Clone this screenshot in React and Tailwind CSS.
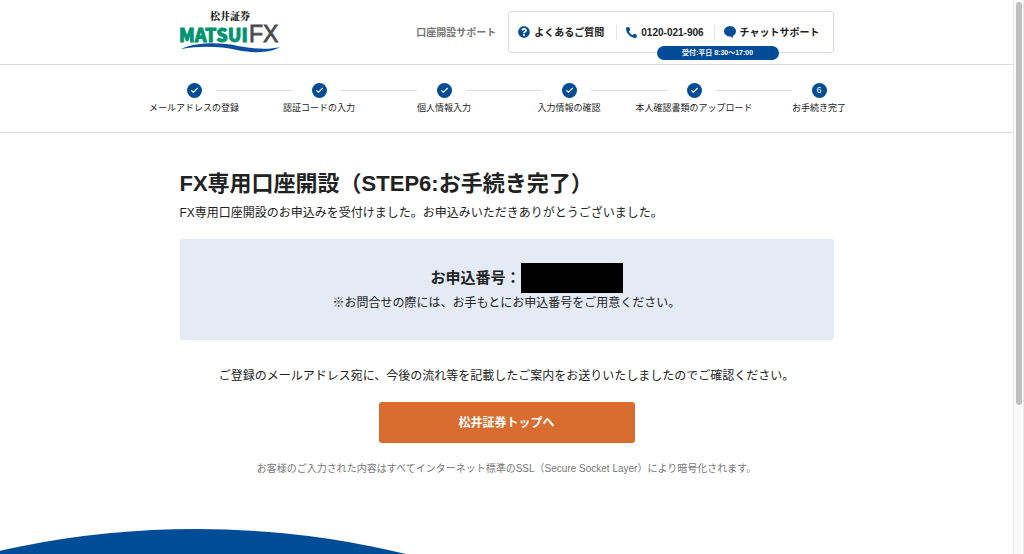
import React from 'react';
import { FaQuestionCircle, FaPhoneAlt } from 'react-icons/fa';
import { Check } from 'lucide-react';

const steps = [
  'メールアドレスの登録',
  '認証コードの入力',
  '個人情報入力',
  '入力情報の確認',
  '本人確認書類のアップロード',
  'お手続き完了',
];

const Logo = () => (
  <a href="#" className="block" aria-label="松井証券 MATSUI FX">
    <svg width="102" height="50" viewBox="0 -4 102 50">
      <text x="50" y="9" textAnchor="middle" fontSize="10" fontWeight="900" fill="#222" fontFamily="'Noto Serif CJK JP', 'Noto Sans CJK JP', serif">
        松井証券
      </text>
      <text x="-1" y="31" fontSize="18" fontWeight="900" fill="#00936f" stroke="#00936f" strokeWidth="0.8" fontFamily="'Noto Sans CJK JP', sans-serif">
        MATSUI
      </text>
      <text x="69" y="31" fontSize="23" fill="#4a4a4c" stroke="#4a4a4c" strokeWidth="0.8" fontFamily="'Liberation Sans', sans-serif">
        FX
      </text>
      <path d="M1 38 C18 30.500 42 31.500 58 35 C76 38.500 90 38.500 100 36 C90 42 74 42.500 57 39 C40 35.500 22 34.500 1 38 Z" fill="#0b4fa3" />
    </svg>
  </a>
);

const ChatIcon = () => (
  <svg width="12" height="12" viewBox="0 0 12 12" fill="#004c97">
    <ellipse cx="6" cy="5.200" rx="6" ry="5.200" />
    <path d="M5.500 9.500 L8.600 12 L9.200 8.500 Z" />
  </svg>
);

const Header = () => (
  <header className="border-b border-[#dcdcdc]">
    <div className="mx-auto flex h-16 max-w-[654px] items-center justify-between">
      <Logo />
      <div className="flex items-center gap-3">
        <span className="text-[10px] font-bold text-[#777]">口座開設サポート</span>
        <div className="relative flex h-[42px] items-center rounded-[3px] border border-[#dcdcdc] pr-[13px] pl-[9px] text-[10px] font-bold">
          <a href="#faq" className="flex items-center gap-1 pr-3">
            <FaQuestionCircle size={12} className="text-[#004c97]" />
            よくあるご質問
          </a>
          <a href="tel:0120021906" className="flex items-center gap-1 border-l border-[#e4e4e4] pr-2.5 pl-[9px]">
            <FaPhoneAlt size={11} className="text-[#004c97]" />
            0120-021-906
          </a>
          <a href="#chat" className="flex items-center gap-1 border-l border-[#e4e4e4] pl-[9px]">
            <ChatIcon />
            チャットサポート
          </a>
          <span className="absolute right-[54px] -bottom-2 flex h-[14px] w-[122px] items-center justify-center rounded-full bg-[#004c97] text-[7px] text-white">
            受付:平日 8:30〜17:00
          </span>
        </div>
      </div>
    </div>
  </header>
);

const Steps = () => (
  <nav className="border-b border-[#dcdcdc] pt-[18px] pb-[17px]">
    <ol className="mx-auto grid max-w-[750px] grid-cols-6">
      {steps.map((label, i) => {
        const last = i === steps.length - 1;
        return (
          <li key={label} className="flex flex-col items-center gap-[3px]">
            <div className="grid w-full grid-cols-[1fr_15px_1fr] items-center">
              <div className={`mr-5 h-px ${i > 0 ? 'bg-[#dcdcdc]' : ''}`} />
              <span className="flex size-[15px] items-center justify-center rounded-full bg-[#004c97] text-[9px] leading-none text-white">
                {last ? i + 1 : <Check size={9} strokeWidth={3} />}
              </span>
              <div className={`ml-3.5 h-px ${last ? '' : 'bg-[#dcdcdc]'}`} />
            </div>
            <span className="text-[9px] leading-[14px] whitespace-nowrap">{label}</span>
          </li>
        );
      })}
    </ol>
  </nav>
);

export default function App() {
  return (
    <div className="flex min-h-screen bg-white font-['Liberation_Sans','Noto_Sans_CJK_JP',sans-serif] text-[#222]" lang="ja">
      <div className="flex min-w-0 flex-1 flex-col">
        <Header />
        <Steps />

        <main className="mx-auto w-full max-w-[654px] pt-[35px]">
          <h1 className="text-[22px] leading-8 font-bold">FX専用口座開設（STEP6:お手続き完了）</h1>
          <p className="mt-[3px] text-xs leading-5">
            FX専用口座開設のお申込みを受付けました。お申込みいただきありがとうございました。
          </p>

          {/* Application number */}
          <section className="mt-4 rounded-[3px] bg-[#e4ebf5] pt-6 pb-[27px] text-center">
            <p className="flex items-center justify-center text-[15px] font-bold">
              お申込番号：
              {/* the mask runs past the number it covers */}
              <span className="h-[30px] w-[62px]">
                <span className="block h-full w-[102px] bg-black" />
              </span>
            </p>
            <p className="text-xs leading-5">※お問合せの際には、お手もとにお申込番号をご用意ください。</p>
          </section>

          <p className="mt-[26px] text-center text-xs leading-5">
            ご登録のメールアドレス宛に、今後の流れ等を記載したご案内をお送りいたしましたのでご確認ください。
          </p>
          <a
            href="#top"
            className="mx-auto mt-4 flex h-[41px] w-64 items-center justify-center rounded-[3px] bg-[#d96d2f] text-xs font-bold text-white"
          >
            松井証券トップへ
          </a>
          <p className="mt-[18px] text-center text-[10px] leading-4 text-[#777]">
            お客様のご入力された内容はすべてインターネット標準のSSL（Secure Socket Layer）により暗号化されます。
          </p>
        </main>

        <footer className="mt-auto">
          <svg className="block" width="408" height="25" viewBox="0 0 408 25">
            <circle cx="196" cy="894" r="894" fill="#004c97" />
          </svg>
        </footer>
      </div>

      {/* Scroll track */}
      <div className="sticky top-0 h-screen w-[11px] border-x border-[#ebebeb] bg-[#fafafa] px-px pt-0.5" aria-hidden="true">
        <div className="mx-auto h-[73%] w-1.5 rounded-full bg-[#c1c1c1]" />
      </div>
    </div>
  );
}
